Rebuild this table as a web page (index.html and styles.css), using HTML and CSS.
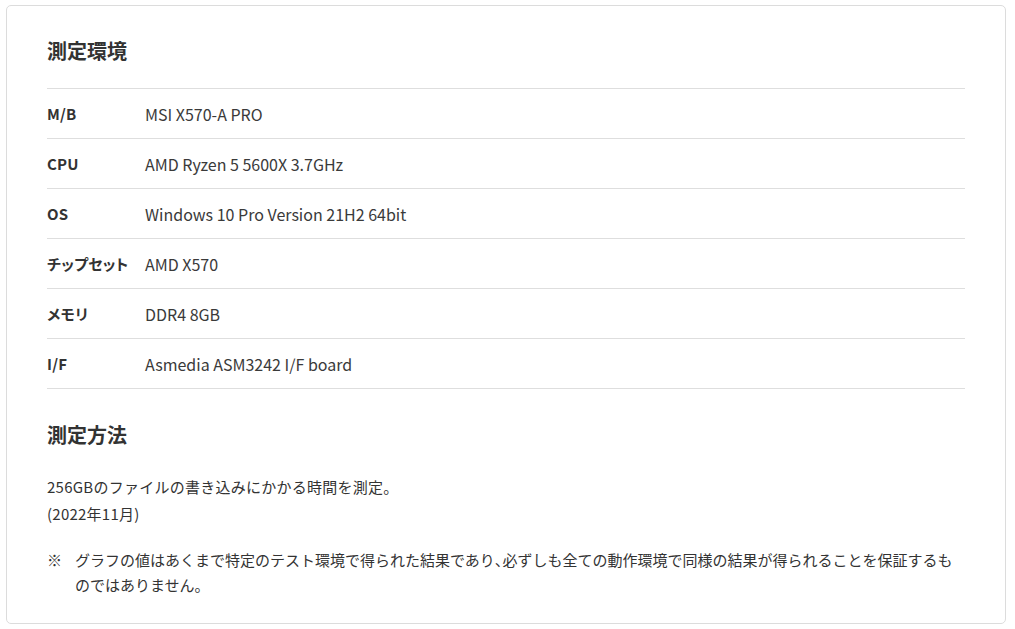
FILE: index.html
```html
<!DOCTYPE html>
<html lang="ja">
<head>
<meta charset="utf-8">
<link rel="stylesheet" href="styles.css">
</head>
<body>
<div class="card">
  <h2 class="heading">測定環境</h2>
  <div class="spec">
    <div class="row"><div class="label">M/B</div><div class="value">MSI X570-A PRO</div></div>
    <div class="row"><div class="label">CPU</div><div class="value">AMD Ryzen 5 5600X 3.7GHz</div></div>
    <div class="row"><div class="label">OS</div><div class="value">Windows 10 Pro Version 21H2 64bit</div></div>
    <div class="row"><div class="label">チップセット</div><div class="value">AMD X570</div></div>
    <div class="row"><div class="label">メモリ</div><div class="value">DDR4 8GB</div></div>
    <div class="row"><div class="label">I/F</div><div class="value">Asmedia ASM3242 I/F board</div></div>
  </div>
  <h2 class="heading heading-method">測定方法</h2>
  <p class="desc">256GBのファイルの書き込みにかかる時間を測定。<br>(2022年11月)</p>
  <div class="note"><span class="mark">※</span><span class="note-text">グラフの値はあくまで特定のテスト環境で得られた結果であり<span class="comma">、</span>必ずしも全ての動作環境で同様の結果が得られることを保証するものではありません。</span></div>
</div>
</body>
</html>
```
FILE: styles.css
```css
* { box-sizing: border-box; }
html, body { margin: 0; padding: 0; background: #fff; }
body {
  font-family: "Noto Sans CJK JP", "Noto Sans", sans-serif;
  color: #333;
  font-size: 15px;
}
.card {
  margin: 5px 0 0 6px;
  width: 1000px;
  height: 619px;
  border: 1px solid #dcdcdc;
  border-radius: 5px;
  padding: 30px 40px 27px 40px;
}
.heading {
  margin: 0 0 22px 0;
  font-size: 20px;
  line-height: 30px;
  font-weight: bold;
  color: #333;
}
.heading-method { margin-top: 31px; margin-bottom: 23px; }
.spec { border-top: 1px solid #dedede; }
.row {
  display: flex;
  align-items: center;
  height: 50px;
  border-bottom: 1px solid #dedede;
}
.label {
  width: 98px;
  font-weight: bold;
  font-size: 15px;
  font-feature-settings: "palt";
  letter-spacing: 0.2px;
}
.value { font-size: 16px; color: #3a3a3a; }
.desc {
  margin: 0 0 20px 0;
  line-height: 27px;
  font-size: 15px;
  letter-spacing: 0.25px;
}
.note {
  display: flex;
  line-height: 25px;
  font-size: 15px;
}
.mark { flex: 0 0 28px; }
.note-text { flex: 1; }
.comma { font-feature-settings: "halt"; }
```
